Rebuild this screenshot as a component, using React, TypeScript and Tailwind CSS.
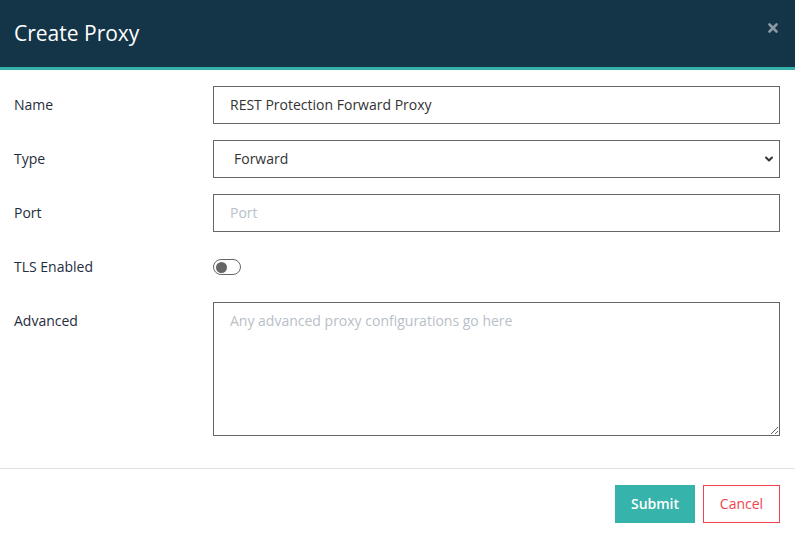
import { ChevronDown, X } from "lucide-react";

const FONT = { fontFamily: '"Open Sans", "Noto Sans", sans-serif' };

function Row({ label, children, tall }: { label: string; children: React.ReactNode; tall?: boolean }) {
  return (
    <div className="flex">
      <div className={`w-[199px] shrink-0 text-[14px] text-[#1f2d3d] ${tall ? "pt-[8px]" : "flex h-[38px] items-center pb-[2px]"}`}>{label}</div>
      <div className="flex-1">{children}</div>
    </div>
  );
}

export default function App() {
  return (
    <div className="h-[539px] w-[795px] bg-white" style={FONT}>
      <header className="flex h-[70px] items-center justify-between border-b-[3px] border-[#34b1aa] bg-[#143447] pl-[14px] pr-[15px]">
        <h1 className="text-[21px] text-white">Create Proxy</h1>
        <X className="mb-[11px] h-[14px] w-[14px] text-[#8a99a4]" strokeWidth={4.5} />
      </header>

      <main className="flex flex-col gap-[16px] pb-[32px] pl-[14px] pr-[15px] pt-[16px]">
        <Row label="Name">
          <input
            className="h-[38px] w-full border border-[#666] px-[16px] pb-[2px] text-[14px] text-[#333] outline-none"
            defaultValue="REST Protection Forward Proxy"
          />
        </Row>
        <Row label="Type">
          <div className="relative">
            <select className="h-[38px] w-full appearance-none border border-[#666] bg-white px-[20px] pb-[2px] text-[14px] text-[#333] outline-none">
              <option>Forward</option>
              <option>Reverse</option>
            </select>
            <ChevronDown className="pointer-events-none absolute right-[5px] top-[13px] h-[12px] w-[12px] text-[#333]" strokeWidth={4} />
          </div>
        </Row>
        <Row label="Port">
          <input
            className="h-[38px] w-full border border-[#666] px-[16px] pb-[2px] text-[14px] text-[#333] outline-none placeholder:text-[#b8c0c8]"
            placeholder="Port"
          />
        </Row>
        <Row label="TLS Enabled">
          <div className="flex h-[38px] items-center">
            <span className="flex h-[16px] w-[28px] items-center rounded-full border border-[#666] px-[2px]">
              <span className="h-[11px] w-[11px] rounded-full bg-[#666]" />
            </span>
          </div>
        </Row>
        <Row label="Advanced" tall>
          <textarea
            className="block h-[134px] w-full resize-y border border-[#666] px-[16px] py-[7px] text-[14px] text-[#333] outline-none placeholder:text-[#b8c0c8]"
            placeholder="Any advanced proxy configurations go here"
          />
        </Row>
      </main>

      <footer className="flex justify-end gap-[8px] border-t border-[#dee2e6] px-[15px] pt-[16px]">
        <button className="h-[38px] w-[80px] bg-[#36b3aa] pb-[2px] text-[14px] font-semibold text-white">Submit</button>
        <button className="h-[38px] w-[77px] border border-[#f0434f] bg-white pb-[2px] text-[14px] text-[#f0434f]">Cancel</button>
      </footer>
    </div>
  );
}
